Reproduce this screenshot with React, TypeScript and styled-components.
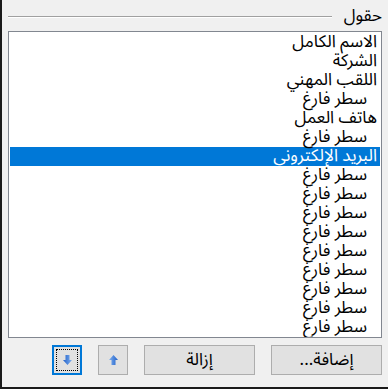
import React from 'react'
import styled, { createGlobalStyle } from 'styled-components'

const GlobalStyle = createGlobalStyle`
  html, body {
    margin: 0;
    padding: 0;
    background: #f0f0f0;
  }
`

const fields = [
  { label: 'الاسم الكامل' },
  { label: 'الشركة' },
  { label: 'اللقب المهني' },
  { label: 'سطر فارغ', blank: true },
  { label: 'هاتف العمل' },
  { label: 'سطر فارغ', blank: true },
  { label: 'البريد الإلكتروني', selected: true },
  { label: 'سطر فارغ', blank: true },
  { label: 'سطر فارغ', blank: true },
  { label: 'سطر فارغ', blank: true },
  { label: 'سطر فارغ', blank: true },
  { label: 'سطر فارغ', blank: true },
  { label: 'سطر فارغ', blank: true },
  { label: 'سطر فارغ', blank: true },
  { label: 'سطر فارغ', blank: true },
  { label: 'سطر فارغ', blank: true },
]

const Dialog = styled.div`
  direction: rtl;
  box-sizing: border-box;
  width: 388px;
  height: 389px;
  background: #f0f0f0;
  border-left: 2px solid #1a1a1a;
  border-bottom: 2px solid #1a1a1a;
  padding: 8px 6px 0 6px;
  display: flex;
  flex-direction: column;
  font-family: "Segoe UI", Tahoma, "Noto Sans Arabic", "DejaVu Sans", sans-serif;
  font-size: 17px;
  color: #000;
`

const GroupHeader = styled.div`
  display: flex;
  align-items: center;
  gap: 12px;
  height: 16px;
`

const GroupLabel = styled.span`
  line-height: 16px;
  white-space: nowrap;
  padding-bottom: 1px;
`

const EtchedLine = styled.div`
  flex: 1;
  height: 0;
  border-top: 1px solid #a0a0a0;
  border-bottom: 1px solid #ffffff;
  margin-top: 2px;
`

const ListBox = styled.div`
  margin-top: 7px;
  box-sizing: border-box;
  height: 307px;
  background: #fff;
  border: 1px solid #828790;
  padding: 1px 1px 0 1px;
  overflow: hidden;
`

const Row = styled.div<{ $selected?: boolean; $blank?: boolean }>`
  height: 19px;
  line-height: 19px;
  padding-right: ${p => (p.$blank ? 13 : 3)}px;
  white-space: nowrap;
  background: ${p => (p.$selected ? '#0078d7' : 'transparent')};
  color: ${p => (p.$selected ? '#fff' : '#000')};
`

const ButtonBar = styled.div`
  margin-top: 7px;
  display: flex;
  gap: 16px;
`

const PushButton = styled.button<{ $wide?: boolean; $focused?: boolean }>`
  position: relative;
  box-sizing: border-box;
  width: ${p => (p.$wide ? 111 : 30)}px;
  height: 30px;
  padding: 0;
  margin: 0;
  background: #e1e1e1;
  border: ${p => (p.$focused ? '2px solid #0078d7' : '1px solid #adadad')};
  font-family: inherit;
  font-size: 17px;
  color: #000;
  display: flex;
  align-items: center;
  justify-content: center;
  direction: rtl;
`

const FocusRing = styled.span`
  position: absolute;
  inset: 2px;
  border: 1px dotted #000;
`

const Arrow = ({ down }: { down?: boolean }) => (
  <svg width="9" height="10" viewBox="0 0 9 10" style={{ transform: down ? 'rotate(180deg)' : undefined }}>
    <defs>
      <linearGradient id={down ? 'gd' : 'gu'} x1="0" y1="0" x2="1" y2="0">
        <stop offset="0" stopColor="#7fb0f0" />
        <stop offset="1" stopColor="#1f5fc8" />
      </linearGradient>
    </defs>
    <polygon points="4.5,0 9,5 6.5,5 6.5,10 2.5,10 2.5,5 0,5" fill={`url(#${down ? 'gd' : 'gu'})`} />
  </svg>
)

export default function App() {
  return (
    <>
      <GlobalStyle />
      <Dialog>
        <GroupHeader>
          <GroupLabel>حقول</GroupLabel>
          <EtchedLine />
        </GroupHeader>
        <ListBox>
          {fields.map((f, i) => (
            <Row key={i} $selected={f.selected} $blank={f.blank}>
              {f.label}
            </Row>
          ))}
        </ListBox>
        <ButtonBar>
          <PushButton $wide>إضافة...</PushButton>
          <PushButton $wide>إزالة</PushButton>
          <PushButton>
            <Arrow />
          </PushButton>
          <PushButton $focused>
            <FocusRing />
            <Arrow down />
          </PushButton>
        </ButtonBar>
      </Dialog>
    </>
  )
}
